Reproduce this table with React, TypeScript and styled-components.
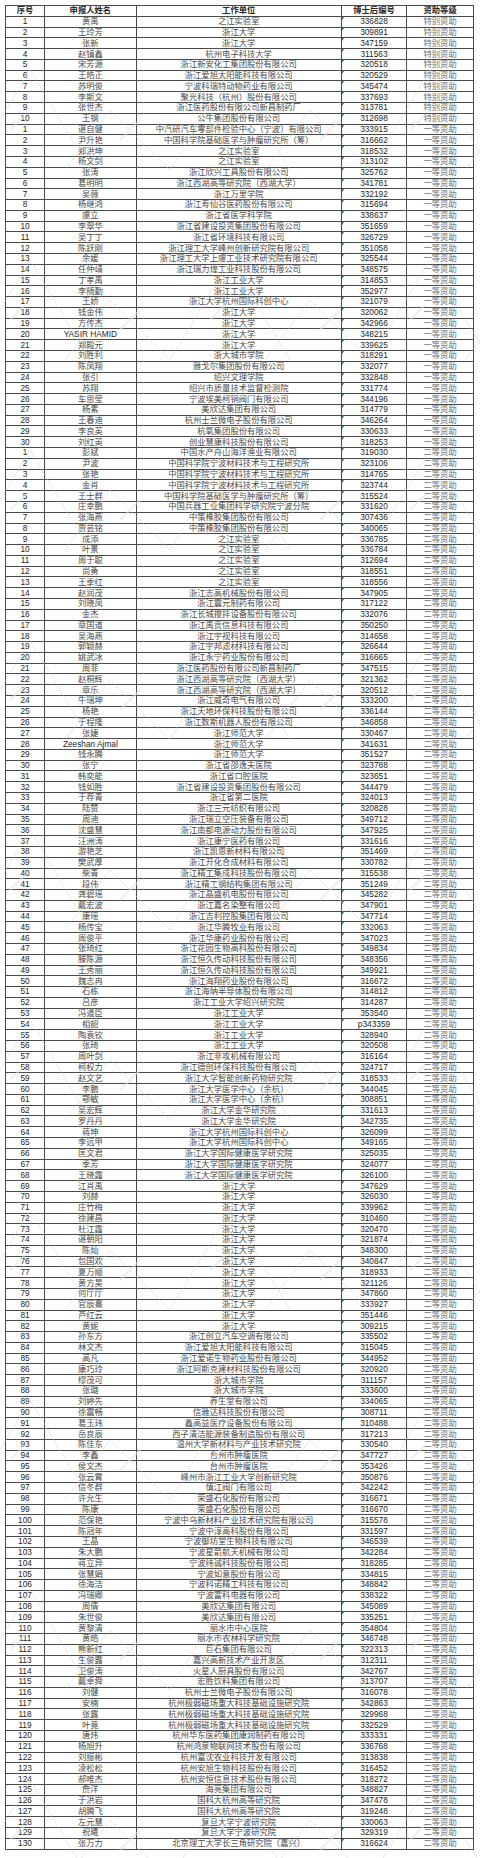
import React from 'react';
import styled, { createGlobalStyle } from 'styled-components';

const GlobalStyle = createGlobalStyle`
  html, body {
    margin: 0;
    padding: 0;
    background: #fff;
  }
  body {
    font-family: "Liberation Sans", "Noto Sans CJK SC", sans-serif;
  }
`;

const special = `黄禹|之江实验室|336828
王玲芳|浙江大学|309891
张新|浙江大学|347159
赵镇鑫|杭州电子科技大学|311563
宋芳源|浙江新安化工集团股份有限公司|320518
王皓正|浙江爱旭太阳能科技有限公司|320529
苏明俊|宁波科瑞特动物药业有限公司|345474
李斯文|聚光科技（杭州）股份有限公司|337693
张世杰|浙江医药股份有限公司新昌制药厂|313781
王钢|公牛集团股份有限公司|312698`;

const first = `谌自健|中汽研汽车零部件检验中心（宁波）有限公司|333915
尹升艳|中国科学院基础医学与肿瘤研究所（筹）|316662
郑洪坤|之江实验室|318532
杨文剑|之江实验室|313102
张涛|浙江欣兴工具股份有限公司|325762
葛明明|浙江西湖高等研究院（西湖大学）|341781
吴薇|浙江万里学院|332192
杨继鸿|浙江寿仙谷医药股份有限公司|315694
虞立|浙江省医学科学院|338637
李翠华|浙江省建设投资集团股份有限公司|351659
吴丁丁|浙江省环境科技有限公司|326729
陈跃刚|浙江理工大学嵊州创新研究院有限公司|351058
余媛|浙江理工大学上虞工业技术研究院有限公司|325544
任仲靖|浙江瑞力煌工业科技股份有限公司|348575
丁孝禹|浙江工业大学|314853
李随勤|浙江工业大学|352977
王娇|浙江大学杭州国际科创中心|321079
钱金伟|浙江大学|320062
方传杰|浙江大学|342966
YASIR HAMID|浙江大学|348215
郑殿元|浙江大学|339625
刘胜利|浙大城市学院|318291
陈凤翔|雅戈尔集团股份有限公司|332077
张引|绍兴文理学院|332848
苏翔|绍兴市质量技术监督检测院|331774
车思莹|宁波埃美柯铜阀门有限公司|344196
杨素|美欣达集团有限公司|314779
王春迪|杭州士兰微电子股份有限公司|346264
李良英|杭氧集团股份有限公司|330633
刘红英|创业慧康科技股份有限公司|318253`;

const second = `彭斌|中国水产舟山海洋渔业有限公司|319030
尹波|中国科学院宁波材料技术与工程研究所|323106
张艳|中国科学院宁波材料技术与工程研究所|314765
金肖|中国科学院宁波材料技术与工程研究所|323744
王士群|中国科学院基础医学与肿瘤研究所（筹）|315524
庄幸鹏|中国兵器工业集团科学研究院宁波分院|331620
张海燕|中策橡胶集团股份有限公司|307436
贾芸铭|中策橡胶集团股份有限公司|340065
成添|之江实验室|336785
叶景|之江实验室|336784
周于聪|之江实验室|312694
尚勇|之江实验室|318551
王季红|之江实验室|318556
赵润茂|浙江志高机械股份有限公司|347905
刘晓凤|浙江震元制药有限公司|317122
金杰|浙江长城搅拌设备股份有限公司|332076
章国道|浙江禹贡信息科技有限公司|350250
吴海燕|浙江宇视科技有限公司|314658
郭颖赫|浙江宇邦滤材科技有限公司|326644
姚武冰|浙江永宁药业股份有限公司|316665
周菲|浙江医药股份有限公司新昌制药厂|347515
赵桐辉|浙江西湖高等研究院（西湖大学）|321362
章乐|浙江西湖高等研究院（西湖大学）|320512
牛瑞坤|浙江威奇电气有限公司|333200
杨艳|浙江天地环保科技股份有限公司|336144
于程隆|浙江数斯机器人股份有限公司|346858
张婕|浙江师范大学|330467
Zeeshan Ajmal|浙江师范大学|341631
钱永腾|浙江师范大学|351527
张宁|浙江省邵逸夫医院|323788
韩奕能|浙江省口腔医院|323651
钱如胜|浙江省建设投资集团股份有限公司|344479
于荐青|浙江省第二医院|324013
陆赞|浙江三元纺织有限公司|320828
周迪|浙江瑞立空压装备有限公司|349712
沈盛慧|浙江南都电源动力股份有限公司|347925
汪洲涛|浙江康宁医药有限公司|331616
游艳芝|浙江凯恩新材料有限公司|351469
樊武厚|浙江开化合成材料有限公司|330782
柴青|浙江精工集成科技股份有限公司|315538
段伟|浙江精工钢结构集团有限公司|351249
龚碧瑶|浙江晶盛机电股份有限公司|345282
戴宏波|浙江嘉名染整有限公司|347901
康瑶|浙江吉利控股集团有限公司|347714
杨传宝|浙江华腾牧业有限公司|332063
周俊平|浙江华康药业股份有限公司|347023
张琦红|浙江花园生物高科股份有限公司|349834
滕陈源|浙江恒久传动科技股份有限公司|348356
王秀丽|浙江恒久传动科技股份有限公司|349921
魏志冉|浙江海翔药业股份有限公司|316672
石栋|浙江海纳半导体股份有限公司|314812
吕彦|浙江工业大学绍兴研究院|314287
冯道臣|浙江工业大学|353540
相韶|浙江工业大学|p343359
陶袁钦|浙江工业大学|328940
张琦|浙江工业大学|320508
周叶剑|浙江非攻机械有限公司|316164
柯权力|浙江德创环保科技股份有限公司|324717
赵文艺|浙江大学智能创新药物研究院|318533
李鹏|浙江大学医学中心（余杭）|344045
鄂敏|浙江大学医学中心（余杭）|308851
吴宏辉|浙江大学金华研究院|331613
罗丹丹|浙江大学金华研究院|342735
蒋坤|浙江大学杭州国际科创中心|326099
李远甲|浙江大学杭州国际科创中心|349165
匡文君|浙江大学国际健康医学研究院|325035
季芳|浙江大学国际健康医学研究院|324077
王晓霞|浙江大学国际健康医学研究院|326100
江肖禹|浙江大学|347629
刘赫|浙江大学|326030
庄竹梅|浙江大学|339962
徐建昌|浙江大学|310460
杜江霞|浙江大学|320470
谌朝阳|浙江大学|321874
陈灿|浙江大学|348300
包国欢|浙江大学|340847
夏万顺|浙江大学|318933
黄方昊|浙江大学|321126
何厅厅|浙江大学|347860
官辰熹|浙江大学|333927
芦红云|浙江大学|351446
黄妮|浙江大学|309215
孙东方|浙江创立汽车空调有限公司|335502
林文杰|浙江爱旭太阳能科技有限公司|315045
高凡|浙江爱诺生物药业股份有限公司|344952
康巧玲|浙江阿斯克建材科技股份有限公司|320920
缪茂可|浙大城市学院|311157
张璐|浙大城市学院|333600
刘婷先|养生堂有限公司|334065
徐震畅|信雅达科技股份有限公司|308711
葛玉玮|鑫高益医疗设备股份有限公司|310488
岳良辰|西子清洁能源装备制造股份有限公司|317213
陈佳东|温州大学新材料与产业技术研究院|330540
李鑫|台州市肿瘤医院|347727
侯文杰|台州市肿瘤医院|353426
张云霄|嵊州市浙江工业大学创新研究院|350876
信冬群|慎江阀门有限公司|342242
许允生|荣盛石化股份有限公司|316671
陈康|荣盛石化股份有限公司|316670
范保艳|宁波中乌新材料产业技术研究院有限公司|315578
陈冠年|宁波中淳高科股份有限公司|331597
王晶|宁波御坊堂生物科技有限公司|346539
朱大鹏|宁波星箭航天机械有限公司|342284
蒋立异|宁波纬诚科技股份有限公司|318285
张慧娟|宁波如意股份有限公司|334815
徐海洁|宁波科诺精工科技有限公司|348842
冯瑞卿|宁波富科电器有限公司|338322
周倩|美欣达集团有限公司|345089
朱世俊|美欣达集团有限公司|335251
黄黎清|丽水市中心医院|354804
黄皓|丽水市农林科学研究院|346748
熊新红|巨石集团有限公司|322313
生俊露|嘉兴高新技术产业开发区|312311
卫俊涛|火星人厨具股份有限公司|342767
戴卓舜|宏胜饮料集团有限公司|313707
刘健|杭州士兰微电子股份有限公司|316078
安楠|杭州极弱磁场重大科技基础设施研究院|342863
张露|杭州极弱磁场重大科技基础设施研究院|329968
叶竟|杭州极弱磁场重大科技基础设施研究院|332529
唐炜|杭州华东医药集团康润制药有限公司|333331
杨旭升|杭州鸿泉物联网技术股份有限公司|336768
刘振彬|杭州富沈农业科技开发有限公司|313838
凌松松|杭州安旭生物科技股份有限公司|316452
郝唯杰|杭州安恒信息技术股份有限公司|318272
詹洋|海亮集团有限公司|348827
于洪岩|国科大杭州高等研究院|347478
胡腾飞|国科大杭州高等研究院|319248
左元慧|复旦大学宁波研究院|330063
祝曦|复旦大学宁波研究院|329319
张万力|北京理工大学长三角研究院（嘉兴）|316624`;

type Entry = { no: number; name: string; unit: string; code: string; level: string };

const parse = (block: string, level: string): Entry[] =>
  block.split('\n').map((line, i) => {
    const [name, unit, code] = line.split('|');
    return { no: i + 1, name, unit, code, level };
  });

const rows: Entry[] = [
  ...parse(special, '特别资助'),
  ...parse(first, '一等资助'),
  ...parse(second, '二等资助'),
];

export default function App() {
  return (
    <Page>
      <GlobalStyle />
      <Table>
        <Row>
          <HeadCell>序号</HeadCell>
          <HeadCell>申报人姓名</HeadCell>
          <HeadCell>工作单位</HeadCell>
          <HeadCell>博士后编号</HeadCell>
          <HeadCell>资助等级</HeadCell>
        </Row>
        {rows.map((r, i) => (
          <Row key={i}>
            <Cell $tone="dark">{r.no}</Cell>
            <Cell $tone={/^[A-Za-z]/.test(r.name) ? 'dark' : 'mid'}>{r.name}</Cell>
            <Cell $tone="mid">{r.unit}</Cell>
            <CodeCell>{r.code}</CodeCell>
            <Cell $tone="light">{r.level}</Cell>
          </Row>
        ))}
      </Table>
      <Watermark viewBox="0 0 480 1858" preserveAspectRatio="none">
        <defs>
          <pattern id="wm" width="200" height="190" patternUnits="userSpaceOnUse" patternTransform="translate(-30 20)">
            <path d="M0 150 L60 50 L120 150 M95 150 L140 90 M140 90 L200 150" fill="none" stroke="#cfcfcf" strokeWidth="0.8" />
            <path d="M40 110 L55 95 M150 120 L170 100" fill="none" stroke="#e2e2e2" strokeWidth="2.4" />
          </pattern>
        </defs>
        <rect x="0" y="0" width="480" height="1858" fill="url(#wm)" />
      </Watermark>
    </Page>
  );
}

const Page = styled.div`
  position: relative;
  width: 480px;
  height: 1858px;
  box-sizing: border-box;
  padding: 5px 0 0 5px;
  background: #fff;
  overflow: hidden;
`;

const Table = styled.div`
  width: 469px;
  border-top: 1px solid #4a4a4a;
  border-left: 1px solid #4a4a4a;
  box-sizing: border-box;
`;

const Row = styled.div`
  display: grid;
  grid-template-columns: 39px 91.7px 205px 65.6px 66.7px;
  height: 10.79px;
`;

const tones = {
  dark: '#1e1e1e',
  mid: '#4a4a4a',
  light: '#6e6e6e',
};

const Cell = styled.div<{ $tone: keyof typeof tones }>`
  box-sizing: border-box;
  border-right: 1px solid #4a4a4a;
  border-bottom: 1px solid #4a4a4a;
  display: flex;
  align-items: center;
  justify-content: center;
  font-size: 8.3px;
  line-height: 9px;
  white-space: nowrap;
  overflow: hidden;
  color: ${(p) => tones[p.$tone]};
`;

const HeadCell = styled(Cell).attrs({ $tone: 'dark' as const })`
  font-weight: 700;
  color: #2a2a2a;
`;

const CodeCell = styled(Cell).attrs({ $tone: 'dark' as const })`
  position: relative;
  &::before {
    content: '';
    position: absolute;
    top: 0;
    left: 0;
    border-top: 3px solid #1f7a2e;
    border-right: 2px solid transparent;
  }
`;

const Watermark = styled.svg`
  position: absolute;
  top: 0;
  left: 0;
  width: 480px;
  height: 1858px;
  pointer-events: none;
  opacity: 0.55;
`;
